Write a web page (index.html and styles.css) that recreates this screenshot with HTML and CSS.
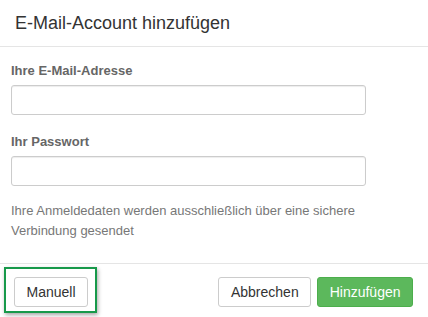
FILE: index.html
```html
<!DOCTYPE html>
<html lang="de">
<head>
<meta charset="utf-8">
<link rel="stylesheet" href="styles.css">
</head>
<body>
<div class="modal">
  <div class="modal-header">
    <h4 class="modal-title">E-Mail-Account hinzufügen</h4>
  </div>
  <div class="modal-body">
    <div class="form-group">
      <label class="label">Ihre E-Mail-Adresse</label>
      <input class="input" type="text">
    </div>
    <div class="form-group">
      <label class="label">Ihr Passwort</label>
      <input class="input" type="password">
    </div>
    <p class="help">Ihre Anmeldedaten werden ausschließlich über eine sichere Verbindung gesendet</p>
  </div>
  <div class="modal-footer">
    <span class="highlight"><button class="btn btn-default">Manuell</button></span>
    <div class="actions">
      <button class="btn btn-default">Abbrechen</button>
      <button class="btn btn-success">Hinzufügen</button>
    </div>
  </div>
</div>
</body>
</html>
```
FILE: styles.css
```css
html, body {
  margin: 0;
  padding: 0;
  background: #fff;
}
body {
  font-family: "Liberation Sans", Arial, sans-serif;
  color: #333;
}
.modal {
  width: 428px;
  height: 317px;
  display: flex;
  flex-direction: column;
}
.modal-header {
  padding: 10px 15px 10px;
  border-bottom: 1px solid #e5e5e5;
}
.modal-title {
  margin: 0;
  font-size: 18px;
  font-weight: normal;
  line-height: 26px;
  color: #333;
}
.modal-body {
  box-sizing: border-box;
  display: flex;
  flex-direction: column;
  padding: 15px 62px 0 11px;
  height: 217px;
  flex-shrink: 0;
  border-bottom: 1px solid #e5e5e5;
}
.form-group {
  display: flex;
  flex-direction: column;
  margin-bottom: 15px;
}
.form-group + .form-group {
  margin-top: 3px;
}
.label {
  font-size: 13px;
  font-weight: bold;
  color: #666;
  line-height: 18px;
  margin-bottom: 5px;
}
.input {
  box-sizing: border-box;
  height: 30px;
  width: 355px;
  border: 1px solid #ccc;
  border-radius: 3px;
  box-shadow: inset 0 1px 1px rgba(0,0,0,0.075);
  margin: 0;
  padding: 4px 8px;
  font: 13px "Liberation Sans", Arial, sans-serif;
}
.help {
  margin: 0;
  font-size: 13px;
  line-height: 20px;
  color: #777;
}
.modal-footer {
  display: flex;
  justify-content: space-between;
  align-items: flex-start;
  padding: 3px 15px 0 4px;
}
.highlight {
  display: inline-flex;
  border: 2px solid #17994a;
  padding: 8px 7px 4px 8px;
  box-shadow: 1px 2px 4px rgba(0,0,0,0.35);
}
.actions {
  display: flex;
  gap: 6px;
  padding-top: 10px;
}
.btn {
  font: 14px "Liberation Sans", Arial, sans-serif;
  line-height: 18px;
  padding: 5px 11.5px;
  border-radius: 3px;
  border: 1px solid #ccc;
  background: #fff;
  color: #333;
  margin: 0;
}
.btn-success {
  background: #5cb85c;
  border-color: #4cae4c;
  color: #fff;
}
```
